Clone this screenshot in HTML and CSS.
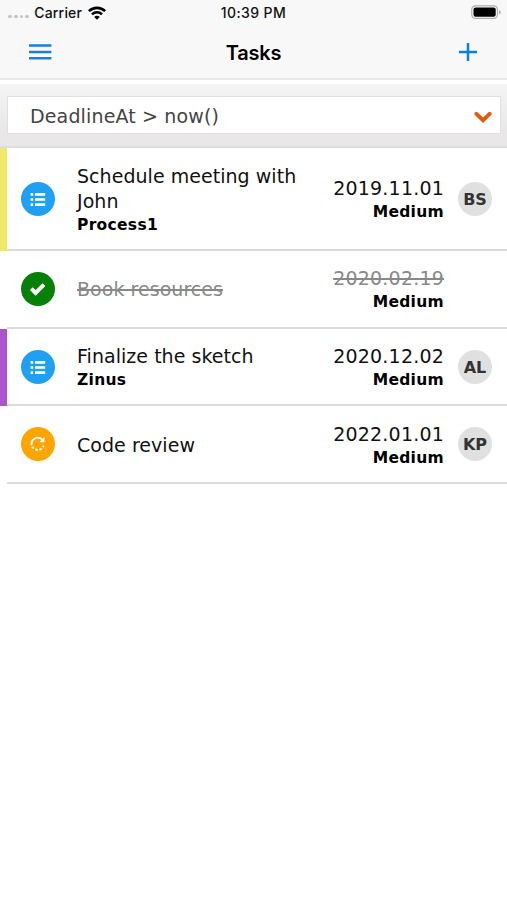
FILE: index.html
```html
<!DOCTYPE html>
<html lang="en">
<head>
<meta charset="utf-8">
<title>Tasks</title>
<link rel="stylesheet" href="styles.css">
</head>
<body>
<header class="top">
  <div class="status">
    <div class="carrier">
      <span class="dots"><i></i><i></i><i></i><i></i></span>
      <span class="carrier-name">Carrier</span>
      <svg class="wifi" width="18" height="14" viewBox="0 0 18 14"><g fill="none" stroke="#000" stroke-width="2.6"><path d="M.9 5.2a11.5 11.5 0 0 1 16.2 0"/><path d="M4 8.4a7 7 0 0 1 10 0"/></g><path d="M9 13.8 6.2 11a4 4 0 0 1 5.6 0z"/></svg>
    </div>
    <time class="clock">10:39 PM</time>
    <svg class="battery" width="30" height="15" viewBox="0 0 30 15"><rect x=".8" y=".8" width="25.6" height="12.6" rx="3.6" fill="#fff" stroke="#aaa" stroke-width="1.2"/><rect x="2.5" y="2.5" width="22.2" height="9.2" rx="2"/><path d="M28 5v4.4q1.7-.7 1.7-2.2T28 5z" fill="#aaa"/></svg>
  </div>
  <nav class="nav">
    <svg width="24" height="18" viewBox="0 0 24 18"><path d="M1 2.5h22.4M1 9h22.4M1 15.2h22.4" stroke="#1b7ce8" stroke-width="2.5"/></svg>
    <h1>Tasks</h1>
    <svg width="18" height="18" viewBox="0 0 18 18"><path d="M0 9h18M9 0v18" stroke="#087bf8" stroke-width="2.4"/></svg>
  </nav>
</header>
<section class="filter">
  <div class="select">
    <span>DeadlineAt &gt; now()</span>
    <svg width="18" height="12" viewBox="0 0 18 12"><path d="m2.4 2.8 6.6 6.4 6.6-6.4" fill="none" stroke="#e65a0c" stroke-width="3.9" stroke-linecap="round"/></svg>
  </div>
</section>
<main class="list">
  <article class="row tall yellow">
    <div class="icon blue"><svg width="16" height="14" viewBox="0 0 16 14"><path d="M.6 2.3h2.6M.6 7.5h2.6M.6 12.6h2.6M5 2.3h10.2M5 7.5h10.2M5 12.6h10.2" stroke="#fff" stroke-width="2.7"/></svg></div>
    <div class="text"><div class="title">Schedule meeting with John</div><div class="sub">Process1</div></div>
    <div class="meta"><div class="date">2019.11.01</div><div class="sub">Medium</div></div>
    <div class="avatar">BS</div>
  </article>
  <article class="row done">
    <div class="icon green"><svg width="18" height="14" viewBox="0 0 18 14"><path d="m2.3 6.6 4.3 4.3 8.3-8.3" fill="none" stroke="#fff" stroke-width="4"/></svg></div>
    <div class="text"><div class="title">Book resources</div></div>
    <div class="meta"><div class="date">2020.02.19</div><div class="sub">Medium</div></div>
    <div class="slot"></div>
  </article>
  <article class="row purple">
    <div class="icon blue"><svg width="16" height="14" viewBox="0 0 16 14"><path d="M.6 2.3h2.6M.6 7.5h2.6M.6 12.6h2.6M5 2.3h10.2M5 7.5h10.2M5 12.6h10.2" stroke="#fff" stroke-width="2.7"/></svg></div>
    <div class="text"><div class="title">Finalize the sketch</div><div class="sub">Zinus</div></div>
    <div class="meta"><div class="date">2020.12.02</div><div class="sub">Medium</div></div>
    <div class="avatar">AL</div>
  </article>
  <article class="row">
    <div class="icon orange"><svg width="16" height="16" viewBox="0 0 16 16"><g fill="none" stroke="#fff" stroke-width="1.9"><path d="M1.7 9.2A6.2 6.2 0 0 1 12 3.4"/><path d="M2.2 10.6A6.2 6.2 0 0 0 13.6 9.6" stroke-dasharray="2.6 1.6"/></g><path d="M14.4.9v5.3H9.4z" fill="#fff"/></svg></div>
    <div class="text"><div class="title">Code review</div></div>
    <div class="meta"><div class="date">2022.01.01</div><div class="sub">Medium</div></div>
    <div class="avatar">KP</div>
  </article>
</main>
</body>
</html>
```
FILE: styles.css
```css
* { box-sizing: border-box; }
body {
  margin: 0;
  background: #fff;
  color: #111;
  font-family: "DejaVu Sans", sans-serif;
}
svg { display: block; flex: none; }
.top {
  height: 80px;
  background: #f8f8f8;
  border-bottom: 2px solid #e8e8e8;
  font-family: Inter, sans-serif;
}
.status {
  display: grid;
  grid-template-columns: 1fr auto 1fr;
  align-items: center;
  height: 25px;
  padding: 0 6px 0 8px;
  font-size: 14px;
  font-weight: 500;
}
.carrier { display: flex; align-items: center; }
.dots { display: flex; gap: 2px; margin: 8px 5px 0 0; }
.dots i { width: 3.8px; height: 3.8px; border-radius: 50%; background: #c4c4c4; }
.carrier-name { width: 48px; margin-right: 6px; letter-spacing: .2px; }
.clock { padding-right: 2px; letter-spacing: .4px; }
.battery { justify-self: end; }
.nav {
  display: grid;
  grid-template-columns: 1fr auto 1fr;
  align-items: center;
  height: 54px;
  padding: 0 30px 0 28px;
}
.nav svg:last-child { justify-self: end; }
.nav h1 { margin: 0; padding: 1px 0 0 2px; font-size: 20px; font-weight: 600; letter-spacing: -.2px; color: #000; }
.filter {
  height: 64px;
  margin-top: 4px;
  padding: 12px 6px 0 7px;
  background: linear-gradient(#f5f5f5, #e9e7e7 75%, #e9e7e7);
  border-bottom: 2px solid #dedede;
}
.select {
  display: flex;
  align-items: center;
  justify-content: space-between;
  height: 38px;
  padding: 1px 8px 0 22px;
  background: #fff;
  border: 1px solid #e0e0e0;
  font-size: 19px;
  letter-spacing: .15px;
  color: #444;
}
.select svg { margin-top: 2px; }
.row {
  position: relative;
  display: flex;
  align-items: center;
  height: 77.7px;
  margin-left: 7px;
  padding: 0 15px 0 14px;
  border-bottom: 2px solid #dcdcdc;
}
.tall { height: 103px; }
.yellow::before, .purple::before {
  content: "";
  position: absolute;
  top: 0;
  bottom: -2px;
  left: -7px;
  width: 7px;
}
.yellow::before { background: #f0e967; }
.purple::before { background: #ab55cc; }
.icon, .avatar {
  display: flex;
  align-items: center;
  justify-content: center;
  flex: none;
  width: 34px;
  height: 34px;
  border-radius: 50%;
}
.blue { background: #20a0f3; }
.green { background: #068006; }
.orange { background: #ffa500; }
.text { width: 240px; margin-left: 22px; }
.title, .date { font-size: 19px; line-height: 25px; }
.title { letter-spacing: .04px; }
.date { letter-spacing: .2px; }
.sub { padding-top: 1px; font-size: 15.5px; line-height: 20px; font-weight: 700; color: #000; letter-spacing: .3px; }
.text { padding-top: 2px; }
.row:not(.tall) .meta { padding-top: 1px; }
.purple .text { padding-top: 1px; }
.meta { flex: 1; text-align: right; white-space: nowrap; }
.avatar, .slot { width: 34px; margin-left: 14px; flex: none; }
.avatar { padding-top: 1px; background: #e0e0e0; color: #333; font-size: 16px; font-weight: 700; }
.done .title, .done .date { color: #888; text-decoration: line-through; text-decoration-thickness: 1.5px; }
```
